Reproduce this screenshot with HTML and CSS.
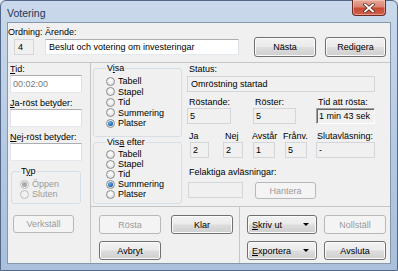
FILE: index.html
```html
<!DOCTYPE html>
<html lang="sv">
<head>
    <meta charset="UTF-8" />
    <title>Votering</title>
    <link rel="stylesheet" href="styles.css">
</head>
<body>
    <div class="window">
        <div class="titlebar">
            <span class="title">Votering</span>
            <div class="close">
                <svg width="12" height="10" viewBox="0 0 12 10">
                    <path d="M2 1.5 L10 8.5 M10 1.5 L2 8.5" stroke="#5a2a22" stroke-width="3.4" stroke-linecap="square" fill="none"/>
                    <path d="M2 1.5 L10 8.5 M10 1.5 L2 8.5" stroke="#ffffff" stroke-width="1.8" stroke-linecap="square" fill="none"/>
                </svg>
            </div>
        </div>

        <div class="client">
            <div class="top">
                <div class="field ordning">
                    <div class="lbl">Ordning:</div>
                    <div class="box ro num">4</div>
                </div>
                <div class="field arende">
                    <div class="lbl">Ärende:</div>
                    <div class="box edit">Beslut och votering om investeringar</div>
                </div>
                <button class="btn nasta">Nästa</button>
                <button class="btn redigera">Redigera</button>
            </div>

            <div class="main">
                <div class="left">
                    <div class="lbl"><u>T</u>id:</div>
                    <div class="box edit tall grey">00:02:00</div>
                    <div class="lbl gap"><u>J</u>a-röst betyder:</div>
                    <div class="box edit tall"></div>
                    <div class="lbl gap"><u>N</u>ej-röst betyder:</div>
                    <div class="box edit tall"></div>

                    <fieldset class="group typ">
                        <legend>T<u>y</u>p</legend>
                        <div class="radio off"><span class="dot on"></span>Öppen</div>
                        <div class="radio off"><span class="dot"></span>Sluten</div>
                    </fieldset>

                    <button class="btn verkstall" disabled>Verkställ</button>
                </div>

                <div class="right">
                    <div class="upper">
                        <div class="options">
                            <fieldset class="group visa">
                                <legend>V<u>i</u>sa</legend>
                                <div class="radio"><span class="dot"></span>Tabell</div>
                                <div class="radio"><span class="dot"></span>Stapel</div>
                                <div class="radio"><span class="dot"></span>Tid</div>
                                <div class="radio"><span class="dot"></span>Summering</div>
                                <div class="radio"><span class="dot on"></span>Platser</div>
                            </fieldset>
                            <fieldset class="group visa-efter">
                                <legend>Vis<u>a</u> efter</legend>
                                <div class="radio"><span class="dot"></span>Tabell</div>
                                <div class="radio"><span class="dot"></span>Stapel</div>
                                <div class="radio"><span class="dot"></span>Tid</div>
                                <div class="radio"><span class="dot on"></span>Summering</div>
                                <div class="radio"><span class="dot"></span>Platser</div>
                            </fieldset>
                        </div>

                        <div class="status">
                            <div class="lbl">Status:</div>
                            <div class="box ro">Omröstning startad</div>

                            <div class="row counts">
                                <div class="cell c-rostande">
                                    <div class="lbl">Röstande:</div>
                                    <div class="box ro">5</div>
                                </div>
                                <div class="cell c-roster">
                                    <div class="lbl">Röster:</div>
                                    <div class="box ro">5</div>
                                </div>
                                <div class="cell c-tid">
                                    <div class="lbl">Tid att rösta:</div>
                                    <div class="box sunken">1 min 43 sek</div>
                                </div>
                            </div>

                            <div class="row results">
                                <div class="cell c-ja">
                                    <div class="lbl">Ja</div>
                                    <div class="box ro">2</div>
                                </div>
                                <div class="cell c-nej">
                                    <div class="lbl">Nej</div>
                                    <div class="box ro">2</div>
                                </div>
                                <div class="cell c-avstar">
                                    <div class="lbl">Avstår</div>
                                    <div class="box ro">1</div>
                                </div>
                                <div class="cell c-franv">
                                    <div class="lbl">Frånv.</div>
                                    <div class="box ro">5</div>
                                </div>
                                <div class="cell c-slut">
                                    <div class="lbl">Slutavläsning:</div>
                                    <div class="box ro">-</div>
                                </div>
                            </div>

                            <div class="lbl felaktiga">Felaktiga avläsningar:</div>
                            <div class="row errors">
                                <div class="box ro fel-box"></div>
                                <button class="btn hantera" disabled>Hantera</button>
                            </div>
                        </div>
                    </div>

                    <div class="lower">
                        <div class="actions">
                            <div class="btn-row">
                                <button class="btn" disabled>Rösta</button>
                                <button class="btn">Klar</button>
                            </div>
                            <div class="btn-row">
                                <button class="btn">Avbryt</button>
                            </div>
                        </div>
                        <div class="output">
                            <div class="btn-row">
                                <button class="btn split"><span><u>S</u>kriv ut</span><i class="caret"></i></button>
                                <button class="btn" disabled>Nollställ</button>
                            </div>
                            <div class="btn-row">
                                <button class="btn split"><span><u>E</u>xportera</span><i class="caret"></i></button>
                                <button class="btn">Avsluta</button>
                            </div>
                        </div>
                    </div>
                </div>
            </div>
        </div>
    </div>
</body>
</html>
```

FILE: styles.css
```css
:root {
    --face: #f0f0f0;
    --line: #c6c6c6;
    --group-line: #d5dfe5;
    --disabled-text: #9a9a9a;
}

* {
    box-sizing: border-box;
}

body {
    margin: 0;
    width: 398px;
    height: 271px;
    overflow: hidden;
    font-family: "Liberation Sans", Arial, sans-serif;
    font-size: 9px;
    color: #000;
    background: #dfe8f2;
}

u {
    text-decoration: underline;
    text-underline-offset: 1px;
}

/* window frame */

.window {
    width: 398px;
    height: 271px;
    display: flex;
    flex-direction: column;
    padding: 0 6px 6px 6px;
    border: 1px solid #54698a;
    border-radius: 6px 6px 0 0;
    background: linear-gradient(180deg, #cad9eb 0%, #c0d2e7 25%, #b3c8e1 60%, #a9c0dc 100%);
}

.titlebar {
    height: 21px;
    display: flex;
    align-items: flex-start;
}

.title {
    margin-top: 6px;
    font-size: 10.5px;
    line-height: 12px;
    color: #1b355a;
}

.close {
    margin-left: auto;
    margin-right: 5px;
    margin-top: -1px;
    width: 34px;
    height: 16px;
    display: flex;
    align-items: center;
    justify-content: center;
    border: 1px solid #6a2b20;
    border-top: none;
    border-radius: 0 0 4px 4px;
    background: linear-gradient(180deg, #e6a898 0%, #d98573 45%, #c74a33 55%, #d0604a 100%);
    box-shadow: inset 0 0 0 1px rgba(255, 210, 200, 0.5);
}

.client {
    flex: 1;
    display: flex;
    flex-direction: column;
    background: var(--face);
    border: 1px solid #8696ab;
}

/* common controls */

.lbl {
    line-height: 12px;
    height: 12px;
    white-space: nowrap;
}

.box {
    height: 16px;
    line-height: 14px;
    padding-left: 2px;
    white-space: nowrap;
    overflow: hidden;
}

.box.tall {
    height: 18px;
    line-height: 16px;
}

.edit {
    background: #fff;
    border: 1px solid;
    border-color: #abadb3 #dbdfe6 #e3e9ef #e2e3ea;
}

.ro {
    background: var(--face);
    border: 1px solid #d2d5d9;
}

.sunken {
    background: var(--face);
    border: 1px solid;
    border-color: #a0a0a0 #ffffff #ffffff #a0a0a0;
    box-shadow: inset 1px 1px 0 #6a6a6a;
    padding-left: 3px;
}

.grey {
    color: #7a7a7a;
}

.btn {
    font: inherit;
    color: #000;
    height: 19px;
    width: 62px;
    padding: 0;
    border: 1px solid #707070;
    border-radius: 3px;
    background: linear-gradient(180deg, #f2f2f2 0%, #ebebeb 48%, #dddddd 52%, #cfcfcf 100%);
    box-shadow: inset 0 0 0 1px #fbfbfb;
}

.btn:disabled {
    color: var(--disabled-text);
    border-color: #b5b9bc;
    background: #f4f4f4;
    box-shadow: none;
}

.split {
    width: 70px;
    display: flex;
    align-items: center;
    justify-content: space-between;
    padding: 0 7px 0 4px;
}

.caret {
    width: 0;
    height: 0;
    border-left: 3px solid transparent;
    border-right: 3px solid transparent;
    border-top: 3px solid #000;
}

.group {
    margin: 0;
    border: 1px solid var(--group-line);
    border-radius: 3px;
    min-inline-size: 0;
}

.group legend {
    padding: 0 1px;
    line-height: 10px;
    height: 10px;
}

.radio {
    display: flex;
    align-items: center;
    height: 10px;
    line-height: 10px;
    white-space: nowrap;
}

.radio.off {
    color: var(--disabled-text);
}

.dot {
    width: 9px;
    height: 9px;
    margin-right: 3px;
    border-radius: 50%;
    border: 1px solid #8b8c8c;
    background: radial-gradient(circle at 50% 35%, #ffffff 0%, #e9e9e9 60%, #d4d4d4 100%);
    display: flex;
    align-items: center;
    justify-content: center;
    flex: none;
}

.dot.on::after {
    content: "";
    width: 5px;
    height: 5px;
    border-radius: 50%;
    background: radial-gradient(circle at 40% 35%, #6fb7ee 0%, #1d68b3 60%, #0f3f7a 100%);
}

.radio.off .dot {
    border-color: #bcbcbc;
    background: #f1f1f1;
}

.radio.off .dot.on::after {
    background: #a8a8a8;
}

/* top row */

.top {
    height: 39px;
    display: flex;
    align-items: flex-start;
    padding-top: 3px;
}

.field .box {
    margin-top: 1px;
}

.ordning {
    width: 37px;
}

.ordning .box {
    margin-left: 6px;
    width: 20px;
    padding-left: 3px;
}

.arende {
    width: 194px;
}

.arende .box {
    padding-left: 3px;
}

.nasta {
    margin-top: 11px;
    margin-left: 15px;
    height: 20px;
}

.redigera {
    margin-top: 11px;
    margin-left: 9px;
    width: 61px;
    height: 20px;
}

/* main area */

.main {
    flex: 1;
    display: flex;
    border-top: 1px solid var(--line);
}

.left {
    width: 83px;
    padding-left: 2px;
    border-right: 1px solid var(--line);
}

.left .box {
    width: 72px;
    padding-left: 2px;
}

.left .lbl.gap {
    margin-top: 4px;
}

.typ {
    margin: 5px 0 0 1px;
    width: 70px;
    height: 38px;
    padding: 3px 0 0 8px;
}

.verkstall {
    margin: 11px 0 0 3px;
    width: 61px;
    height: 18px;
}

.right {
    flex: 1;
    display: flex;
    flex-direction: column;
}

.upper {
    height: 144px;
    display: flex;
    border-bottom: 1px solid var(--line);
}

.options {
    width: 91px;
    padding-left: 2px;
}

.visa {
    width: 89px;
    height: 74px;
    padding: 3px 0 0 12px;
}

.visa .radio {
    height: 10.5px;
}

.visa-efter {
    margin-top: 0;
    width: 89px;
    height: 67px;
    padding: 2px 0 0 12px;
}

.status {
    margin-left: 5px;
    width: 188px;
}

.status > .lbl {
    padding-left: 2px;
}

.status > .box {
    margin-top: 1px;
    padding-left: 3px;
}

.row {
    display: flex;
    align-items: flex-start;
}

.cell .box {
    padding-left: 2px;
}

.counts {
    margin-top: 4px;
}

.counts .lbl {
    padding-left: 2px;
}

.c-rostande { width: 44px; }
.c-roster { width: 43px; margin-left: 22px; }
.c-tid { width: 59px; margin-left: 20px; }

.results {
    margin-top: 6px;
}

.c-ja { width: 19px; margin-left: 3px; }
.c-ja .lbl { margin-left: -1px; }
.c-nej { width: 20px; margin-left: 14px; }
.c-nej .lbl { padding-left: 2px; }
.c-avstar { width: 22px; margin-left: 10px; }
.c-avstar .lbl { margin-left: -1px; }
.c-franv { width: 22px; margin-left: 10px; }
.c-franv .lbl { margin-left: -2px; }
.c-slut { width: 59px; margin-left: 9px; }
.c-slut .lbl { padding-left: 1px; }

.felaktiga {
    margin-top: 8px;
    padding-left: 2px;
}

.errors {
    margin-top: 4px;
}

.fel-box {
    width: 55px;
    margin-left: 1px;
}

.hantera {
    margin-left: 12px;
    width: 61px;
    height: 17px;
}

/* bottom buttons */

.lower {
    flex: 1;
    display: flex;
}

.btn-row {
    display: flex;
    gap: 7px;
}

.btn-row + .btn-row {
    margin-top: 7px;
}

.actions {
    width: 149px;
    padding: 8px 0 0 8px;
    border-right: 1px solid var(--line);
}

.actions .btn-row {
    gap: 10px;
}

.output {
    flex: 1;
    padding: 8px 0 0 7px;
}
```
